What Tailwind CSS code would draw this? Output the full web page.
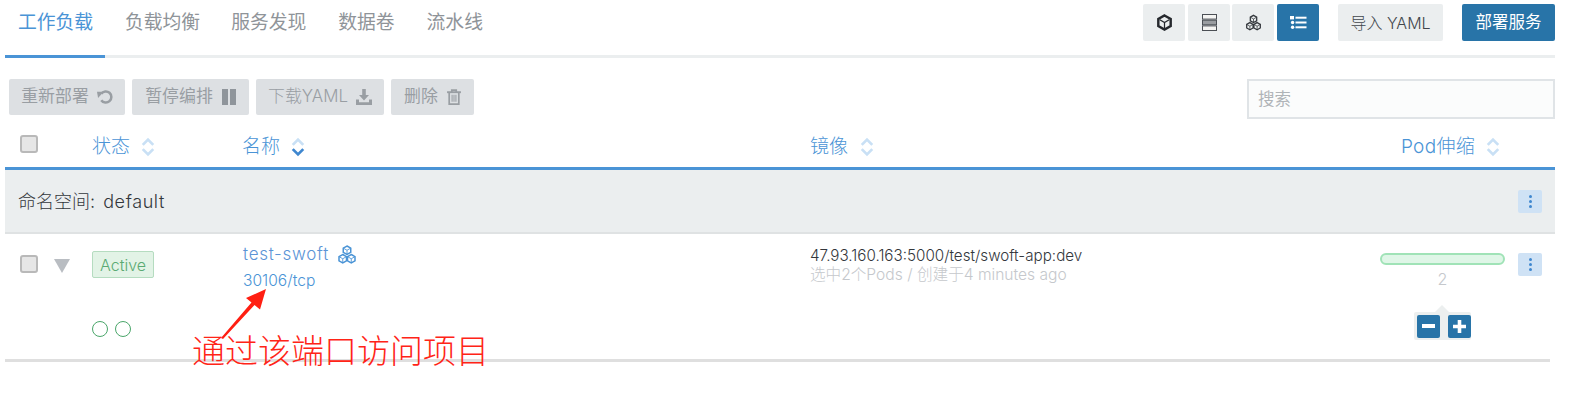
<!DOCTYPE html>
<html lang="en">
<head>
  <meta charset="UTF-8"/>
  <title>Workloads</title>
  <script src="https://cdn.jsdelivr.net/npm/@tailwindcss/browser@4"></script>
</head>
<body class="bg-white h-[411px] overflow-hidden font-['Inter','Noto_Sans_CJK_SC',sans-serif] text-[#3a3f45]">
  <div class="relative w-[1550px] ml-[5px]">

    <!-- top tabs -->
    <div class="flex justify-between h-[58px] border-b-[3px] border-[#ebeeef]">
      <div class="flex text-[18.8px] text-[#8f9499]">
        <div class="w-[100px] pl-[13px] pt-[9px] h-[58px] border-b-[3px] border-[#4a94d6] text-[#4a94d6]">工作负载</div>
        <div class="pl-[20px] pt-[9px]">负载均衡</div>
        <div class="pl-[31px] pt-[9px]">服务发现</div>
        <div class="pl-[32px] pt-[9px]">数据卷</div>
        <div class="pl-[32px] pt-[9px]">流水线</div>
      </div>
      <div class="flex items-start pt-[4px]">
        <button class="w-[42px] h-[37px] rounded-[2px] bg-[#ebeeef] flex items-center justify-center">
          <svg class="w-[15px] h-[17px]" viewBox="0 0 16 18" fill="none" stroke="#25282d" stroke-width="2.6"><path d="M8 1.5 14.6 5.2v7.6L8 16.5 1.4 12.8V5.2z"/><path stroke-width="1.3" d="M3 6l5 3 5-3M8 9v6"/></svg>
        </button>
        <button class="w-[42px] h-[37px] ml-[3px] rounded-[2px] bg-[#ebeeef] flex items-center justify-center">
          <svg class="w-[15px] h-[17px]" viewBox="0 0 15 17"><rect x=".5" y=".5" width="14" height="4.6" fill="#f4f4f2" stroke="#4b4f55"/><rect x=".5" y="6.2" width="14" height="4.6" fill="#9a9da1" stroke="#4b4f55"/><rect x=".5" y="11.9" width="14" height="4.6" fill="#f4f4f2" stroke="#4b4f55"/></svg>
        </button>
        <button class="w-[42px] h-[37px] ml-[2px] rounded-[2px] bg-[#ebeeef] flex items-center justify-center">
          <svg class="w-[17px] h-[18px]" viewBox="0 0 16 16" fill="none" stroke="#33373c" stroke-width="1.2"><path d="M8 .8 11 2.5v3.4L8 7.6 5 5.9V2.5zM4.6 7.6 7.6 9.3v3.4l-3 1.7-3-1.7V9.3zM11.4 7.6l3 1.7v3.4l-3 1.7-3-1.7V9.3z"/><path stroke-width=".7" d="M5 2.5l3 1.7 3-1.7M8 4.2v3.4M1.6 9.3l3 1.7 3-1.7M4.6 11v3.4M8.4 9.3l3 1.7 3-1.7M11.4 11v3.4"/></svg>
        </button>
        <button class="w-[42px] h-[37px] ml-[3px] rounded-[2px] bg-[#2874a8] flex items-center justify-center">
          <svg class="w-[17px] h-[13px]" viewBox="0 0 17 13" fill="#fff"><rect x="0" y="0" width="4" height="3.4"/><rect x="5.5" y=".7" width="11" height="2"/><circle cx="2.6" cy="6.5" r="1.7"/><rect x="5.5" y="5.5" width="11" height="2"/><circle cx="2.6" cy="11.3" r="1.7"/><rect x="5.5" y="10.3" width="11" height="2"/></svg>
        </button>
        <button class="w-[105px] h-[37px] ml-[19px] rounded-[2px] bg-[#ebeeef] text-[16px] font-light text-[#41464c]">导入 YAML</button>
        <button class="w-[93px] h-[37px] ml-[19px] rounded-[2px] bg-[#2874a8] text-[16.5px] text-white">部署服务</button>
      </div>
    </div>

    <!-- bulk actions + search -->
    <div class="flex justify-between pt-[21px] h-[69px] text-[16.9px] text-[#999ea3]">
      <div class="flex items-start pl-[4px] gap-[7px]">
        <button class="w-[116px] h-[36px] rounded-[2px] bg-[#dde0e3] flex items-center justify-center gap-[8px]">重新部署
          <svg class="w-[16px] h-[15px]" viewBox="0 0 15 14" fill="none" stroke="#999ea3" stroke-width="2.4"><path d="M4 9.5A5.2 5.2 0 1 0 4 3.5"/><path fill="#999ea3" stroke="none" d="M0 1.5h6.2L1 7.5z"/></svg>
        </button>
        <button class="w-[117px] h-[36px] rounded-[2px] bg-[#dde0e3] flex items-center justify-center gap-[9px]">暂停编排
          <span class="flex gap-[2px]"><span class="w-[6px] h-[16px] bg-[#8f959b]"></span><span class="w-[6px] h-[16px] bg-[#8f959b]"></span></span>
        </button>
        <button class="w-[128px] h-[36px] rounded-[2px] bg-[#dde0e3] flex items-center justify-center gap-[8px] font-light">下载YAML
          <svg class="w-[16px] h-[16px]" viewBox="0 0 16 16" fill="#999ea3"><path d="M6.2 0h3.6v6H13L8 11.4 3 6h3.2z"/><path d="M0 10.5h3v2.7h10v-2.7h3V16H0z"/></svg>
        </button>
        <button class="w-[83px] h-[36px] rounded-[2px] bg-[#dde0e3] flex items-center justify-center gap-[9px]">删除
          <svg class="w-[14px] h-[16px]" viewBox="0 0 13 15" fill="none" stroke="#999ea3" stroke-width="1.6"><path d="M0 3h13" stroke-width="1.8"/><path d="M4.4 3V1h4.2v2"/><path d="M2 3.5v10.7h9V3.5"/><path stroke-width="1" d="M4.7 5.5v6.5M6.5 5.5v6.5M8.3 5.5v6.5"/></svg>
        </button>
      </div>
      <input class="w-[308px] h-[40px] border-2 border-[#e0e4e7] bg-[#fbfcfc] pl-[9px] text-[16.5px] placeholder:text-[#b0b4b8] outline-none" placeholder="搜索"/>
    </div>

    <!-- table head -->
    <div class="grid grid-cols-[87px_150px_568px_1fr_80px] h-[43px] border-b-[3px] border-[#4a94d6] text-[#4a94d6] text-[19px] font-light">
      <div class="pl-[15px] pt-[8px]"><input type="checkbox" class="appearance-none block w-[18px] h-[18px] rounded-[3px] border-2 border-[#b9b9b9] bg-[#e6e6e6]"/></div>
      <div class="flex items-center gap-[11px]">状态
        <svg class="w-[14px] h-[20px]" viewBox="0 0 13 19" fill="none" stroke="#c9e0f5" stroke-width="2.6"><path d="M1.5 7.5l5-5 5 5M1.5 11.5l5 5 5-5"/></svg>
      </div>
      <div class="flex items-center gap-[11px]">名称
        <svg class="w-[14px] h-[20px]" viewBox="0 0 13 19" fill="none" stroke="#c9e0f5" stroke-width="2.6"><path d="M1.5 7.5l5-5 5 5"/><path stroke="#3f87cf" d="M1.5 11.5l5 5 5-5"/></svg>
      </div>
      <div class="flex items-center gap-[12px]">镜像
        <svg class="w-[14px] h-[20px]" viewBox="0 0 13 19" fill="none" stroke="#c9e0f5" stroke-width="2.6"><path d="M1.5 7.5l5-5 5 5M1.5 11.5l5 5 5-5"/></svg>
      </div>
      <div class="flex items-center justify-end gap-[11px] pr-[55px] whitespace-nowrap -ml-[100px] tracking-[0.3px]">Pod伸缩
        <svg class="w-[14px] h-[20px]" viewBox="0 0 13 19" fill="none" stroke="#c9e0f5" stroke-width="2.6"><path d="M1.5 7.5l5-5 5 5M1.5 11.5l5 5 5-5"/></svg>
      </div>
    </div>

    <!-- namespace group -->
    <div class="flex items-center justify-between h-[64px] bg-[#ebeeef] border-b-2 border-[#dfe2e3] pl-[13px] pr-[13px] text-[18px] font-light text-[#33373c]">
      <span>命名空间:&nbsp;<span class="ml-[3px] tracking-[0.6px]">default</span></span>
      <button class="w-[24px] h-[23px] rounded-[2px] bg-[#cfe2f5] flex flex-col items-center justify-center gap-[2px]">
        <span class="w-[3px] h-[3px] rounded-full bg-[#3f87cf]"></span><span class="w-[3px] h-[3px] rounded-full bg-[#3f87cf]"></span><span class="w-[3px] h-[3px] rounded-full bg-[#3f87cf]"></span>
      </button>
    </div>

    <!-- workload row -->
    <div class="grid grid-cols-[87px_151px_567px_1fr] h-[128px] w-[1545px] border-b-[3px] border-[#dfdfdf]">
      <div class="flex items-start pt-[21px] pl-[15px] gap-[16px]">
        <input type="checkbox" class="appearance-none block w-[18px] h-[18px] rounded-[3px] border-2 border-[#b9b9b9] bg-[#e6e6e6]"/>
        <span class="mt-[4px] w-0 h-0 border-x-[8px] border-x-transparent border-t-[14px] border-t-[#b9bdc2]"></span>
      </div>
      <div class="pt-[17px]">
        <div class="w-[62px] h-[27px] rounded-[2px] border border-[#b5dcc0] bg-[#e2f3e6] text-[#5aaa72] text-[16px] font-light flex items-center justify-center">Active</div>
        <div class="flex gap-[7px] mt-[43px]">
          <span class="w-[16px] h-[16px] rounded-full border border-[#4aa66a]"></span>
          <span class="w-[16px] h-[16px] rounded-full border border-[#4aa66a]"></span>
        </div>
      </div>
      <div class="pt-[8px] text-[#4a94d6] font-light">
        <div class="flex items-center gap-[8px] text-[17px] tracking-[0.7px] text-[#5b94d6]">test-swoft
          <svg class="w-[20px] h-[20px]" viewBox="0 0 16 16" fill="none" stroke="#4a94d6" stroke-width="1.2"><path d="M8 .8 11 2.5v3.4L8 7.6 5 5.9V2.5zM4.6 7.6 7.6 9.3v3.4l-3 1.7-3-1.7V9.3zM11.4 7.6l3 1.7v3.4l-3 1.7-3-1.7V9.3z"/><path stroke-width=".7" d="M5 2.5l3 1.7 3-1.7M8 4.2v3.4M1.6 9.3l3 1.7 3-1.7M4.6 11v3.4M8.4 9.3l3 1.7 3-1.7M11.4 11v3.4"/></svg>
        </div>
        <div class="text-[15.6px] mt-[1px]">30106/tcp</div>
      </div>
      <div class="grid grid-cols-[1fr_125px_37px_8px]">
        <div class="pt-[12px] leading-[19px] font-light">
          <div class="text-[15.2px] text-[#33373c]">47.93.160.163:5000/test/swoft-app:dev</div>
          <div class="text-[15.6px] text-[#c5c8cc]">选中2个Pods / 创建于4 minutes ago</div>
        </div>
        <div class="flex flex-col items-center pt-[19px]">
          <div class="w-[125px] h-[12px] rounded-full border-2 border-[#a0e3b7] bg-[#dff6e7]"></div>
          <div class="text-[16px] font-light text-[#c5c8cc] mt-[2px]">2</div>
          <div class="relative mt-[21px] w-[57px] h-[28px] bg-[#ecefef] rounded-[2px] flex items-center justify-between pl-[3px]">
            <span class="absolute -top-[7px] left-[21px] w-0 h-0 border-x-[7px] border-x-transparent border-b-[7px] border-b-[#ecefef]"></span>
            <button class="w-[23px] h-[23px] bg-[#2874a8] rounded-[2px] flex items-center justify-center"><span class="w-[13px] h-[4px] bg-white"></span></button>
            <button class="w-[23px] h-[23px] bg-[#2874a8] rounded-[2px] flex items-center justify-center">
              <svg class="w-[13px] h-[13px]" viewBox="0 0 13 13" fill="#fff"><path d="M4.7 0h3.6v4.7H13v3.6H8.3V13H4.7V8.3H0V4.7h4.7z"/></svg>
            </button>
          </div>
        </div>
        <div class="pt-[19px] pl-[13px]">
          <button class="w-[24px] h-[23px] rounded-[2px] bg-[#cfe2f5] flex flex-col items-center justify-center gap-[2px]">
            <span class="w-[3px] h-[3px] rounded-full bg-[#3f87cf]"></span><span class="w-[3px] h-[3px] rounded-full bg-[#3f87cf]"></span><span class="w-[3px] h-[3px] rounded-full bg-[#3f87cf]"></span>
          </button>
        </div>
      </div>
    </div>

    <!-- red annotation over the table -->
    <svg class="absolute left-[205px] top-[285px] w-[60px] h-[60px]" viewBox="0 0 60 60" fill="#ff1f12"><path d="M11 53 41.5 17.5 36 13 56 4 50 24.5 44.5 20 13 54z"/></svg>
    <div class="absolute left-[187px] top-[327px] text-[33px] leading-[48px] whitespace-nowrap text-[#ff2417] font-light">通过该端口访问项目</div>
  </div>
</body>
</html>
